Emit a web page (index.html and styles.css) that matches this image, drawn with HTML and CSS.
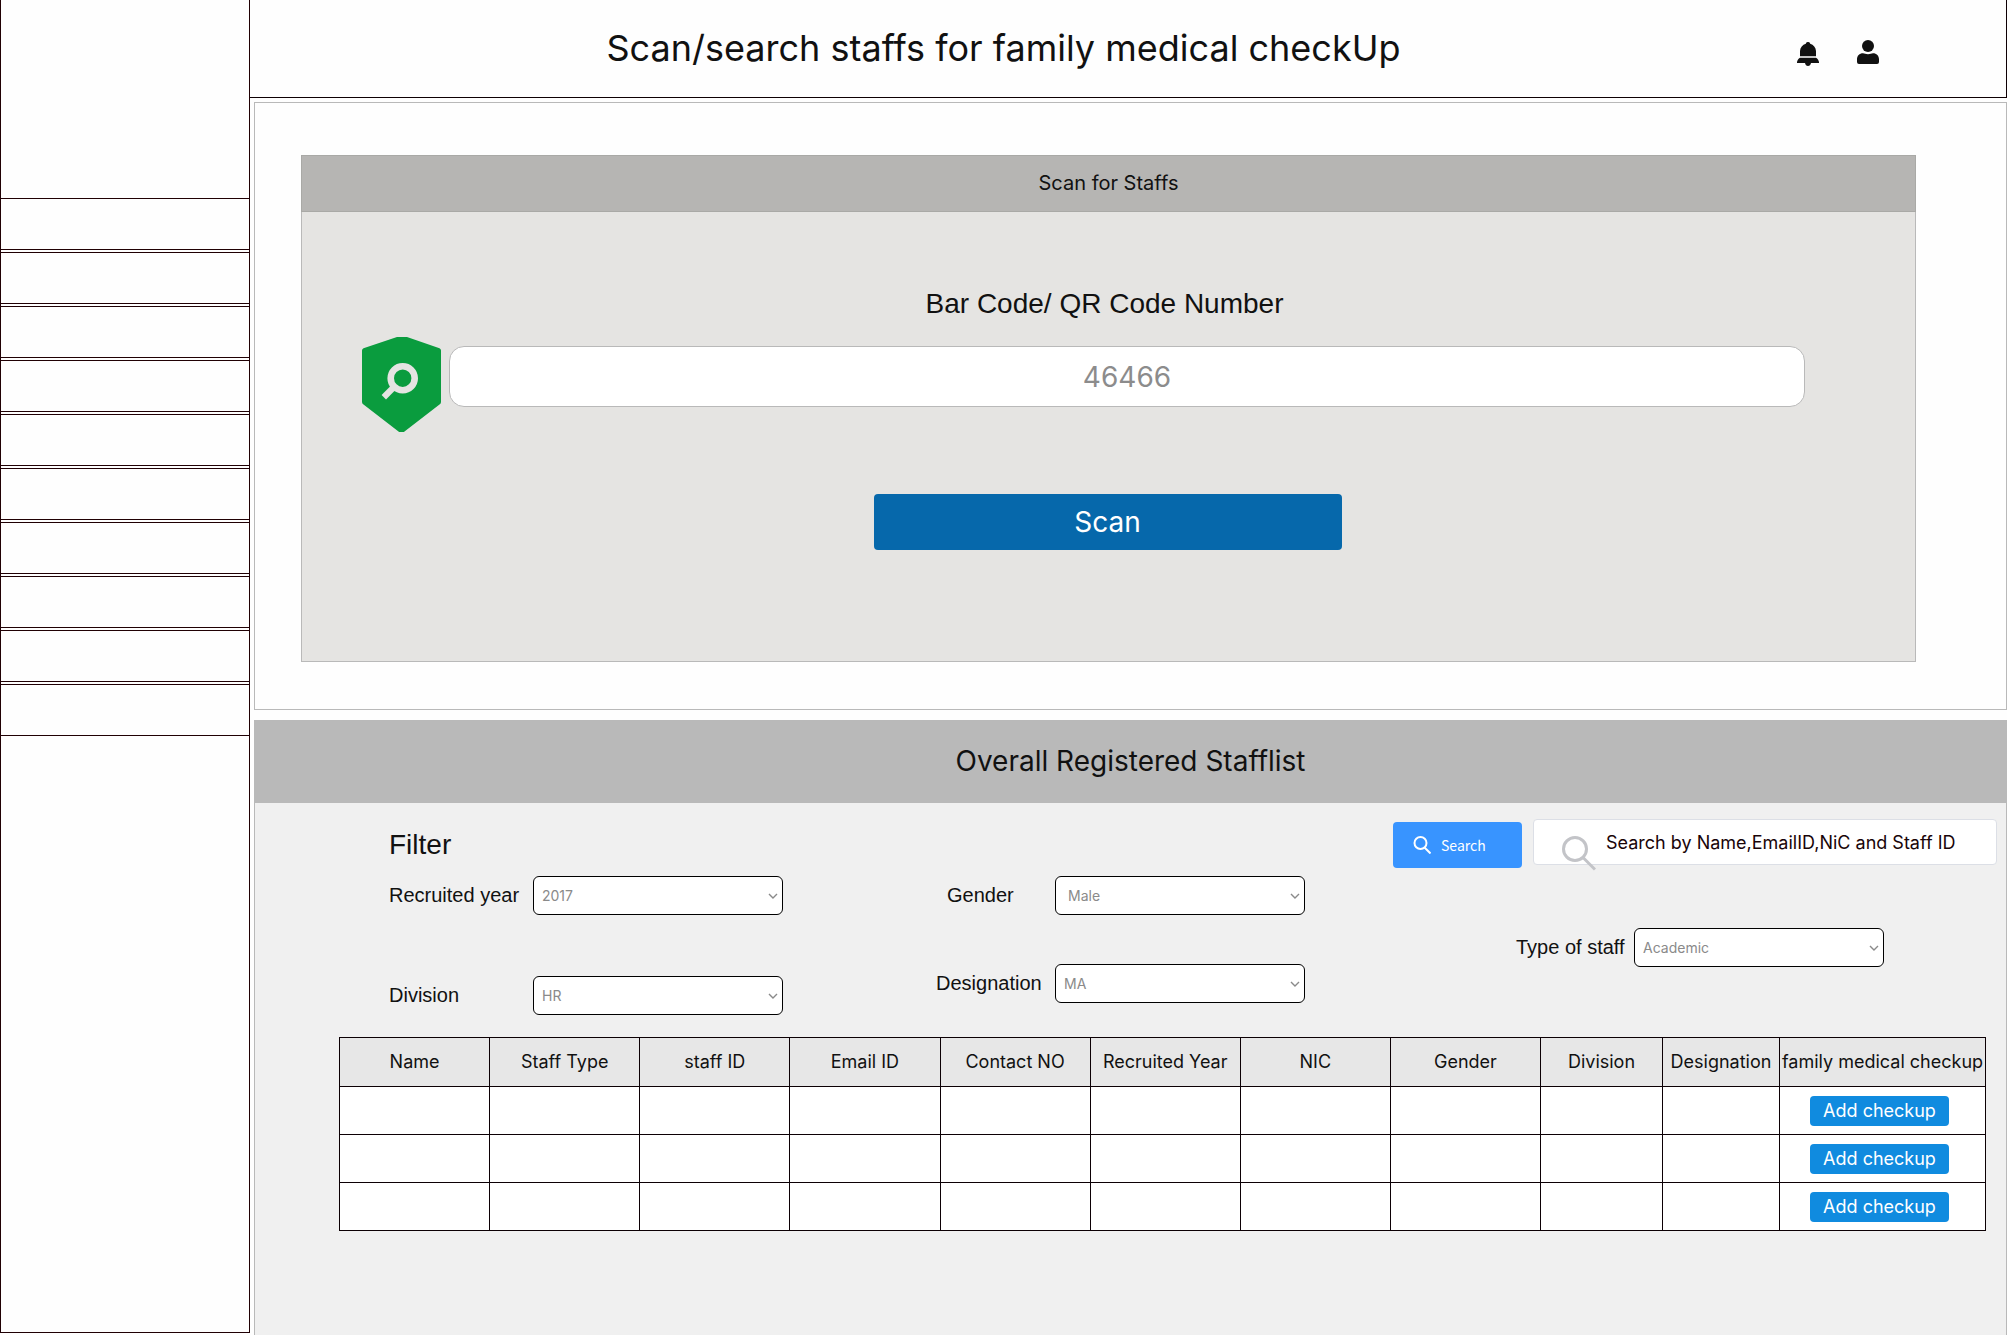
FILE: index.html
```html
<!DOCTYPE html>
<html lang="en">
<head>
<meta charset="utf-8">
<meta name="viewport" content="width=device-width, initial-scale=1">
<title>Family medical checkup</title>
<link rel="stylesheet" href="styles.css">
</head>
<body>
<div class="app">
  <nav class="sidebar" aria-label="Main">
    <ul class="menu">
      <li class="menu-item"></li>
      <li class="menu-item"></li>
      <li class="menu-item"></li>
      <li class="menu-item"></li>
      <li class="menu-item"></li>
      <li class="menu-item"></li>
      <li class="menu-item"></li>
      <li class="menu-item"></li>
      <li class="menu-item"></li>
      <li class="menu-item"></li>
    </ul>
  </nav>
  <main class="main">
    <header class="topbar">
      <h1 class="title">Scan/search staffs for family medical checkUp</h1>
      <div class="actions">
        <button class="icon-button" type="button" aria-label="Notifications">
          <svg width="22" height="26" viewBox="0 0 22 26" fill="#111"><path d="M11 2a2 2 0 0 1 2.200 1.800C16.500 4.800 18.800 7.500 19 11v5.300H3V11C3.200 7.500 5.500 4.800 8.800 3.800A2 2 0 0 1 11 2zM3 17.700h16c1.600 1 2.600 2.500 3 4.300v1h-8c-.4 1.800-1.400 3-3 3s-2.600-1.200-3-3H0v-1c.4-1.800 1.400-3.300 3-4.300z"/></svg>
        </button>
        <button class="icon-button" type="button" aria-label="Profile">
          <svg width="22" height="26" viewBox="0 0 22 26" fill="#111"><circle cx="11" cy="6" r="6"/><path d="M6 13.200c1.400 0 2.800 1 5 1s3.600-1 5-1c3.600 0 6 2.600 6 6V22a2 2 0 0 1-2 2H2a2 2 0 0 1-2-2v-2.800c0-3.400 2.400-6 6-6z"/></svg>
        </button>
      </div>
    </header>

    <section class="scan-panel">
      <form class="scan-card">
        <h2 class="scan-head">Scan for Staffs</h2>
        <div class="scan-body">
          <label class="code-label" for="code">Bar Code/ QR Code Number</label>
          <div class="code-row">
            <svg width="79" height="95" viewBox="0 0 79 95"><path fill="#0a9c3e" d="M35 0h10l32.500 11.200Q79 12 79 13.500V65q0 1.500-1.500 2.500L42.500 94.500Q42 95 41 95h-3q-1 0-1.500-.5L1.500 67.500Q0 66.500 0 65V13.500Q0 12 1.500 11.200z"/><circle cx="40.700" cy="41.200" r="12" fill="none" stroke="#e5e4e2" stroke-width="6.600"/><path d="M31.500 50.500 21.800 60.200" stroke="#e5e4e2" stroke-width="6.200"/></svg>
            <input class="code-input" id="code" type="text" value="46466">
          </div>
          <button class="scan-button" type="button">Scan</button>
        </div>
      </form>
    </section>

    <section class="list">
      <h2 class="list-head">Overall Registered Stafflist</h2>
      <div class="list-body">
        <div class="filters">
          <div class="filter-left">
            <h3 class="filter-title">Filter</h3>
            <div class="field field-wide">
              <label for="year">Recruited year</label>
              <div class="select"><select id="year"><option>2017</option></select><svg width="10" height="8" viewBox="0 0 10 8"><path d="M1 2l4 4 4-4"/></svg></div>
            </div>
            <div class="field field-wide">
              <label for="division">Division</label>
              <div class="select"><select id="division"><option>HR</option></select><svg width="10" height="8" viewBox="0 0 10 8"><path d="M1 2l4 4 4-4"/></svg></div>
            </div>
          </div>
          <div class="filter-middle">
            <div class="field field-indent">
              <label for="gender">Gender</label>
              <div class="select"><select id="gender"><option>Male</option></select><svg width="10" height="8" viewBox="0 0 10 8"><path d="M1 2l4 4 4-4"/></svg></div>
            </div>
            <div class="field">
              <label for="designation">Designation</label>
              <div class="select"><select id="designation"><option>MA</option></select><svg width="10" height="8" viewBox="0 0 10 8"><path d="M1 2l4 4 4-4"/></svg></div>
            </div>
          </div>
          <div class="filter-right">
            <div class="search-row" role="search">
              <button class="search-button" type="button"><svg width="18" height="18" viewBox="0 0 18 18" fill="none" stroke="#fff" stroke-width="2"><circle cx="7.500" cy="7" r="6"/><path d="M11.500 11.500l6 6"/></svg>Search</button>
              <div class="search-box">
                <input class="search-input" type="search" aria-label="Search staff" placeholder="Search by Name,EmailID,NiC and Staff ID">
                <svg width="34" height="35" viewBox="0 0 34 35" fill="none" stroke="#c3c4c8" stroke-width="3"><circle cx="13" cy="13" r="11.500"/><path d="M21 21.500l12 12"/></svg>
              </div>
            </div>
            <div class="field field-end">
              <label for="type">Type of staff</label>
              <div class="select"><select id="type"><option>Academic</option></select><svg width="10" height="8" viewBox="0 0 10 8"><path d="M1 2l4 4 4-4"/></svg></div>
            </div>
          </div>
        </div>

        <table class="staff">
          <colgroup>
            <col span="8" class="col-wide"><col class="col-division"><col class="col-designation"><col class="col-checkup">
          </colgroup>
          <thead>
            <tr><th scope="col">Name</th><th scope="col">Staff Type</th><th scope="col">staff ID</th><th scope="col">Email ID</th><th scope="col">Contact NO</th><th scope="col">Recruited Year</th><th scope="col">NIC</th><th scope="col">Gender</th><th scope="col">Division</th><th scope="col">Designation</th><th scope="col">family medical checkup</th></tr>
          </thead>
          <tbody>
            <tr><td></td><td></td><td></td><td></td><td></td><td></td><td></td><td></td><td></td><td></td><td class="checkup"><button class="add-button" type="button">Add checkup</button></td></tr>
            <tr><td></td><td></td><td></td><td></td><td></td><td></td><td></td><td></td><td></td><td></td><td class="checkup"><button class="add-button" type="button">Add checkup</button></td></tr>
            <tr><td></td><td></td><td></td><td></td><td></td><td></td><td></td><td></td><td></td><td></td><td class="checkup"><button class="add-button" type="button">Add checkup</button></td></tr>
          </tbody>
        </table>
      </div>
    </section>
  </main>
</div>
</body>
</html>
```

FILE: styles.css
```css
* {
  box-sizing: border-box;
}

body {
  margin: 0;
  background: #fefefe;
  color: #111;
  font-family: Inter, "Liberation Sans", sans-serif;
}

h1, h2, h3 {
  margin: 0;
  font-weight: 400;
}

button, input, select {
  margin: 0;
  font-family: inherit;
}

svg {
  display: block;
  flex: none;
}

.app {
  display: flex;
  min-height: 100vh;
}

/* Sidebar */

.sidebar {
  flex: none;
  width: 250px;
  margin-bottom: 2px;
  padding-top: 198px;
  border: 1px solid #200004;
  border-top: 0;
}

.menu {
  display: grid;
  gap: 2px;
  margin: 0;
  padding: 0;
  list-style: none;
}

.menu-item {
  height: 52px;
  border: solid #200004;
  border-width: 1px 0;
}

/* Header */

.main {
  display: flex;
  flex: 1;
  flex-direction: column;
  min-width: 0;
}

.topbar {
  display: grid;
  grid-template-columns: 1fr 249px;
  align-items: center;
  height: 98px;
  border: solid #0e0004;
  border-width: 0 1px 1px 0;
}

.title {
  padding-bottom: 2px;
  font-size: 36px;
  line-height: 44px;
  text-align: center;
}

.actions {
  display: flex;
  gap: 38px;
  padding: 8px 0 0 40px;
}

.icon-button {
  padding: 0;
  border: 0;
  background: none;
}

/* Scan panel */

.scan-panel {
  margin: 4px 0 10px 4px;
  padding: 52px 90px 47px 46px;
  border: 1px solid #b9b9b9;
}

.scan-card {
  border: 1px solid #b9b9b9;
  border-top: 0;
  background: #e5e4e2;
}

.scan-head {
  margin: 0 -1px;
  border: 1px solid #a9a9a6;
  background: #b6b5b3;
  font-size: 20px;
  line-height: 55px;
  text-align: center;
}

.scan-body {
  display: flex;
  flex-direction: column;
  align-items: center;
  padding: 76px 2px 111px 0;
}

.code-label {
  padding-right: 6px;
  font-family: "Liberation Sans", sans-serif;
  font-size: 28px;
  line-height: 32px;
}

.code-row {
  display: flex;
  gap: 8px;
  align-self: stretch;
  margin: 17px 108px 62px 60px;
}

.code-input {
  flex: 1;
  min-width: 0;
  height: 61px;
  margin-top: 9px;
  border: 1px solid #b9b9b9;
  border-radius: 15px;
  background: #fff;
  color: #8c8c8c;
  font-size: 28px;
  text-align: center;
}

.scan-button {
  width: 468px;
  height: 56px;
  border: 0;
  border-radius: 4px;
  background: #0668ab;
  color: #fff;
  font-size: 28px;
}

/* Staff list */

.list {
  display: flex;
  flex: 1;
  flex-direction: column;
  margin-left: 4px;
}

.list-head {
  background: #b9b9b9;
  font-size: 28px;
  line-height: 83px;
  text-align: center;
}

.list-body {
  flex: 1;
  padding: 0 20px 104px 84px;
  border: solid #b9b9b9;
  border-width: 0 1px;
  background: #f0f0f0;
}

.filters {
  display: grid;
  grid-template-columns: 1fr auto auto;
  column-gap: 88px;
  margin: 0 -11px 22px 50px;
}

.filter-left {
  padding-top: 26px;
}

.filter-title {
  margin-bottom: 15px;
  font-family: "Liberation Sans", sans-serif;
  font-size: 28px;
  line-height: 32px;
}

.field {
  display: grid;
  grid-template-columns: 119px 250px;
  align-items: center;
  font-family: "Liberation Sans", sans-serif;
  font-size: 20px;
}

.field-wide {
  grid-template-columns: 144px 250px;
}

.field-wide + .field-wide {
  margin-top: 61px;
}

.filter-middle {
  padding-top: 73px;
}

.field-indent {
  margin-bottom: 49px;
}

.field-indent label {
  padding-left: 11px;
}

.field-end {
  grid-template-columns: 118px 250px;
  justify-content: end;
  margin: 60px 113px 0 0;
}

.select {
  position: relative;
}

.select select {
  display: block;
  width: 100%;
  height: 39px;
  padding: 0 24px 0 8px;
  border: 1px solid #000;
  border-radius: 6px;
  appearance: none;
  background: #fff;
  color: #8a8a8a;
  font-family: Inter, sans-serif;
  font-size: 14px;
}

.field-indent .select select {
  padding-left: 12px;
}

.select svg {
  position: absolute;
  top: 16px;
  right: 5px;
  fill: none;
  stroke: #8a8a8a;
  stroke-width: 1.4;
  pointer-events: none;
}

.search-row {
  display: flex;
  gap: 11px;
  padding-top: 16px;
}

.search-button {
  display: flex;
  gap: 10px;
  align-items: center;
  width: 129px;
  height: 46px;
  margin-top: 3px;
  padding: 0 0 0 20px;
  border: 0;
  border-radius: 4px;
  background: #3894ff;
  color: #fff;
  font-family: "Noto Sans CJK SC", sans-serif;
  font-size: 14px;
}

.search-box {
  position: relative;
  width: 464px;
}

.search-box svg {
  position: absolute;
  top: 17px;
  left: 29px;
}

.search-input {
  width: 100%;
  height: 46px;
  padding: 0 12px 0 72px;
  border: 1px solid #dcdfe6;
  border-radius: 4px;
  appearance: none;
  background: #fff;
  font-size: 18px;
}

.search-input::placeholder {
  color: #190408;
  opacity: 1;
}

.staff {
  width: 100%;
  border-collapse: collapse;
  table-layout: fixed;
  background: #fff;
  font-size: 18px;
}

.col-division {
  width: 122px;
}

.col-designation {
  width: 117px;
}

.col-checkup {
  width: 206px;
}

.staff th,
.staff td {
  height: 48px;
  padding: 0;
  border: 1px solid #0c0004;
  text-align: center;
}

.staff th {
  height: 49px;
  padding-bottom: 2px;
  background: #e7e7e7;
  font-weight: 400;
  white-space: nowrap;
}

.staff .checkup {
  padding-right: 6px;
}

.add-button {
  display: block;
  width: 139px;
  height: 30px;
  margin: 0 auto;
  padding: 0;
  border: 0;
  border-radius: 4px;
  background: #108bdf;
  color: #fff;
  font-size: 18px;
}
```
